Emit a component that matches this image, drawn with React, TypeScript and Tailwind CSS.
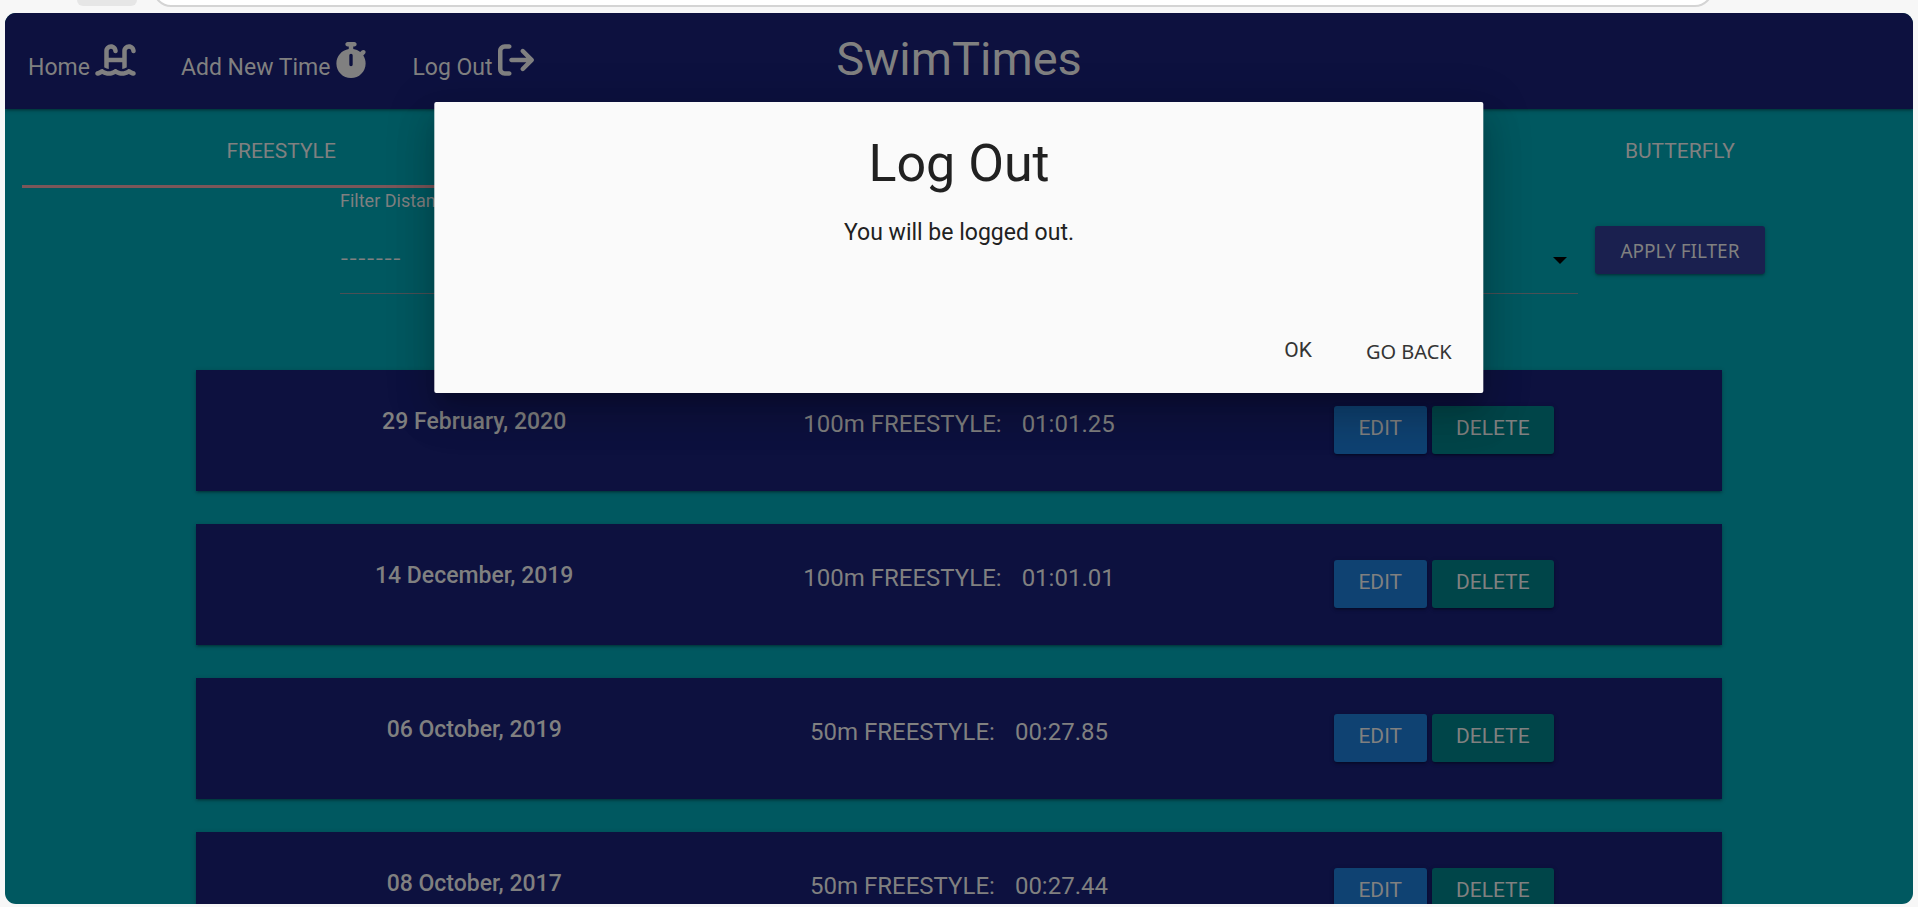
import { FaArrowRightFromBracket, FaStopwatch, FaWaterLadder } from "react-icons/fa6";

const times = [
  { date: "29 February, 2020", event: "100m FREESTYLE:", time: "01:01.25" },
  { date: "14 December, 2019", event: "100m FREESTYLE:", time: "01:01.01" },
  { date: "06 October, 2019", event: "50m FREESTYLE:", time: "00:27.85" },
  { date: "08 October, 2017", event: "50m FREESTYLE:", time: "00:27.44" },
];

const strokes = ["FREESTYLE", "BACKSTROKE", "BREASTSTROKE", "BUTTERFLY"];

const raised =
  "shadow-[0_2px_2px_0_rgba(0,0,0,0.14),0_3px_1px_-2px_rgba(0,0,0,0.12),0_1px_5px_0_rgba(0,0,0,0.2)]";

function BrowserEdge() {
  return (
    <div className="flex h-[13px] shrink-0 items-start overflow-hidden bg-[#f7f7f7]">
      <div className="ml-[77px] h-1.5 w-[60px] rounded-b-md bg-[#e6e6e6]" />
      <div className="mr-[205px] ml-4 flex h-[7px] flex-1 items-end overflow-hidden">
        <div className="h-9 w-full shrink-0 rounded-full border-2 border-[#d4d4d4] bg-white" />
      </div>
    </div>
  );
}

function NavBar() {
  return (
    <header
      className={`relative grid h-24 shrink-0 grid-cols-[1fr_auto_1fr] items-center bg-[#0d113f] px-[23px] ${raised}`}
    >
      <nav className="flex items-end gap-[45px] text-[23px] leading-6">
        <a href="#home" className="flex items-end gap-[5px] whitespace-nowrap">
          Home
          <FaWaterLadder className="mb-0.5 h-9 w-[41px]" />
        </a>
        <a href="#add" className="flex items-end gap-[5px] whitespace-nowrap">
          Add New Time
          <FaStopwatch className="mb-0.5 h-9 w-8" />
        </a>
        <a href="#logout" className="flex items-end gap-[5px] whitespace-nowrap">
          Log Out
          <FaArrowRightFromBracket className="mb-0.5 h-9 w-9" />
        </a>
      </nav>
      <h1 className="pb-1.5 text-[47px] leading-none">SwimTimes</h1>
    </header>
  );
}

function StrokeTabs() {
  return (
    <div className="relative h-[79px] shrink-0 pl-[43px]">
      <div className="grid h-full grid-cols-4 items-center pt-1">
        {strokes.map((s) => (
          <a key={s} href={`#${s.toLowerCase()}`} className="text-center text-[21px] leading-6">
            {s}
          </a>
        ))}
      </div>
      <div className="absolute bottom-0 left-[17px] h-[3px] w-1/4 bg-[#7b5659]" />
    </div>
  );
}

function Filter() {
  return (
    <form
      className="flex shrink-0 items-start gap-[17px] pr-[148px] pl-[335px]"
      onSubmit={(e) => e.preventDefault()}
    >
      <div className="flex-1 pt-px">
        <label htmlFor="distance" className="block text-[18px] leading-6">
          Filter Distance
        </label>
        <div className="relative mt-3">
          <select
            id="distance"
            className="h-[69px] w-full appearance-none border-b border-[#4b5055] bg-transparent font-[Inter,sans-serif] text-[19px] text-[#808080]"
          >
            <option>-------</option>
          </select>
          <svg
            viewBox="0 0 14 7"
            className="pointer-events-none absolute top-8 right-[11px] h-[7px] w-3.5"
            aria-hidden="true"
          >
            <path d="M0 0h14L7 7z" fill="#000" />
          </svg>
        </div>
      </div>
      <button
        type="submit"
        className={`mt-[38px] h-12 w-[170px] rounded-[3px] bg-[#1a204f] pt-0.5 font-['Noto_Sans',sans-serif] text-[19px] text-[#808080] ${raised}`}
      >
        APPLY FILTER
      </button>
    </form>
  );
}

function TimeCard({ date, event, time }: { date: string; event: string; time: string }) {
  return (
    <li
      className={`grid h-[121px] shrink-0 grid-cols-3 items-start bg-[#0d113f] px-9 pt-9 text-center ${raised}`}
    >
      <h2 className="pt-0.5 text-[23px] leading-7 font-medium">{date}</h2>
      <p className="flex justify-center gap-5 pt-1 text-[24px] leading-7">
        <span>{event}</span>
        <span>{time}</span>
      </p>
      <div className="flex justify-center gap-[5px] text-[21px]">
        <button type="button" className={`h-12 w-[93px] rounded-[3px] bg-[#0f4272] pb-0.5 ${raised}`}>
          EDIT
        </button>
        <button type="button" className={`h-12 w-[122px] rounded-[3px] bg-[#004549] pb-0.5 ${raised}`}>
          DELETE
        </button>
      </div>
    </li>
  );
}

function LogOutDialog() {
  return (
    <div
      role="dialog"
      aria-labelledby="logout-title"
      className="absolute top-[10%] left-1/2 flex w-[55%] -translate-x-1/2 flex-col rounded-[2px] bg-[#fafafa] text-center text-[#212121] shadow-[0_24px_38px_3px_rgba(0,0,0,0.14),0_9px_46px_8px_rgba(0,0,0,0.12),0_11px_15px_-7px_rgba(0,0,0,0.2)]"
    >
      <h2 id="logout-title" className="pt-[34px] text-[52px] leading-14">
        Log Out
      </h2>
      <p className="pt-[27px] text-[23px] leading-7">You will be logged out.</p>
      <div className="mt-[89px] flex items-start justify-end gap-[54px] pr-8 pb-[25px] text-[21px] leading-7 text-[#343434]">
        <button type="button" className="leading-7">OK</button>
        <button type="button" className="font-['Noto_Sans',sans-serif] text-[20px] leading-8">
          GO BACK
        </button>
      </div>
    </div>
  );
}

export default function App() {
  return (
    <div className="flex h-screen flex-col overflow-hidden bg-[#f7f7f7] font-[Roboto,sans-serif]">
      <BrowserEdge />
      <main className="relative mx-[5px] mb-[3px] flex min-h-0 flex-1 flex-col overflow-hidden rounded-[11px] bg-[#005860] text-[#808080]">
        <NavBar />
        <StrokeTabs />
        <Filter />
        <ul className="mx-auto mt-[76px] flex w-4/5 shrink-0 flex-col gap-[33px]">
          {times.map((t) => (
            <TimeCard key={t.date} {...t} />
          ))}
        </ul>
        <LogOutDialog />
      </main>
    </div>
  );
}
